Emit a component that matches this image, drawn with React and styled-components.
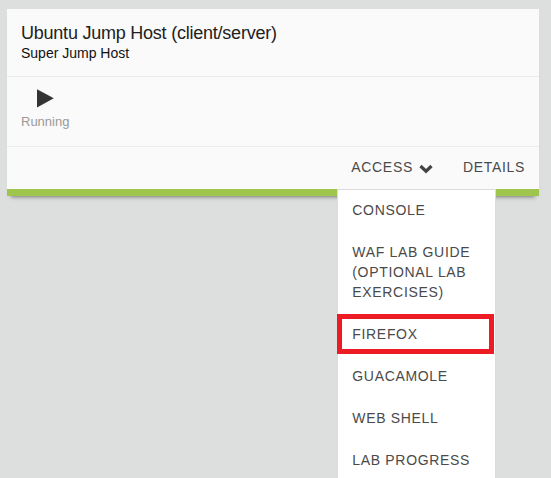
import React from "react";
import styled, { createGlobalStyle } from "styled-components";

const GlobalStyle = createGlobalStyle`
  * { box-sizing: border-box; }
  html, body { margin: 0; height: 100%; overflow: hidden; }
  body {
    background: #dddfde;
    font-family: "Liberation Sans", Arial, sans-serif;
  }
`;

const Page = styled.main`
  height: 478px;
  overflow: hidden;
  padding: 0 12px 0 7px;
`;

const PreviousCard = styled.div`
  height: 0;
  margin-bottom: 9px;
  box-shadow: 0 5px 4px -4px #999;
`;

const Card = styled.section`
  height: 187px;
  display: flex;
  flex-direction: column;
  background: #fafafa;
  border-bottom: 7px solid #9fc54d;
  box-shadow: 0 5px 4px -4px #777;
`;

const Header = styled.header`
  height: 68px;
  padding: 14px 14px 0;
  border-bottom: 1px solid #ebebeb;
`;

const Title = styled.h1`
  margin: 0;
  font-size: 18px;
  font-weight: 400;
  line-height: 20px;
  letter-spacing: -0.23px;
  color: #212121;
`;

const Subtitle = styled.div`
  font-size: 14px;
  line-height: 20px;
  color: #111;
`;

const Status = styled.div`
  height: 70px;
  padding: 12px 14px 0;
  border-bottom: 1px solid #ebebeb;
  font-size: 13px;
  line-height: 20px;
  color: #999;
`;

const PlayIcon = styled.svg`
  display: block;
  width: 18px;
  height: 20px;
  margin: 0 0 3px 15px;
`;

const Actions = styled.div`
  flex: 1;
  display: flex;
  justify-content: flex-end;
  padding: 10px 14px 0 0;
`;

const Action = styled.div`
  position: relative;
  display: flex;
  margin-left: 30px;
  font-size: 14px;
  line-height: 20px;
  letter-spacing: 0.68px;
  color: #4a4a4a;
  white-space: nowrap;
`;

const Chevron = styled.svg`
  width: 14px;
  height: 10px;
  margin: 7px 0 0 6px;
`;

const Menu = styled.ul`
  position: absolute;
  top: 32px;
  left: -14px;
  width: 159px;
  margin: 0;
  padding: 0;
  list-style: none;
  background: #fff;
  border: 1px solid #dcdcdc;
  white-space: normal;
`;

const MenuItem = styled.li`
  position: relative;
  padding: 10px 14px 12px;
`;

const Highlight = styled.span`
  position: absolute;
  top: 0;
  left: -1px;
  width: 157px;
  height: 40px;
  border: 5px solid #ed1c24;
`;

const items = [
  { label: "CONSOLE" },
  { label: "WAF LAB GUIDE (OPTIONAL LAB EXERCISES)" },
  { label: "FIREFOX", marked: true },
  { label: "GUACAMOLE" },
  { label: "WEB SHELL" },
  { label: "LAB PROGRESS" },
];

export default function App() {
  return (
    <Page>
      <GlobalStyle />
      <PreviousCard />
      <Card>
        <Header>
          <Title>Ubuntu Jump Host (client/server)</Title>
          <Subtitle>Super Jump Host</Subtitle>
        </Header>
        <Status>
          <PlayIcon viewBox="0 0 18 20">
            <path d="M1 0.3 L17.8 9.3 L1 18.6 Z" fill="#333" />
          </PlayIcon>
          Running
        </Status>
        <Actions>
          <Action>
            ACCESS
            <Chevron viewBox="0 0 14 10">
              <path d="M1.5 2 L7 7.2 L12.5 2" fill="none" stroke="#444" strokeWidth="3.2" />
            </Chevron>
            <Menu>
              {items.map(({ label, marked }) => (
                <MenuItem key={label}>
                  {label}
                  {marked && <Highlight />}
                </MenuItem>
              ))}
            </Menu>
          </Action>
          <Action>DETAILS</Action>
        </Actions>
      </Card>
    </Page>
  );
}
